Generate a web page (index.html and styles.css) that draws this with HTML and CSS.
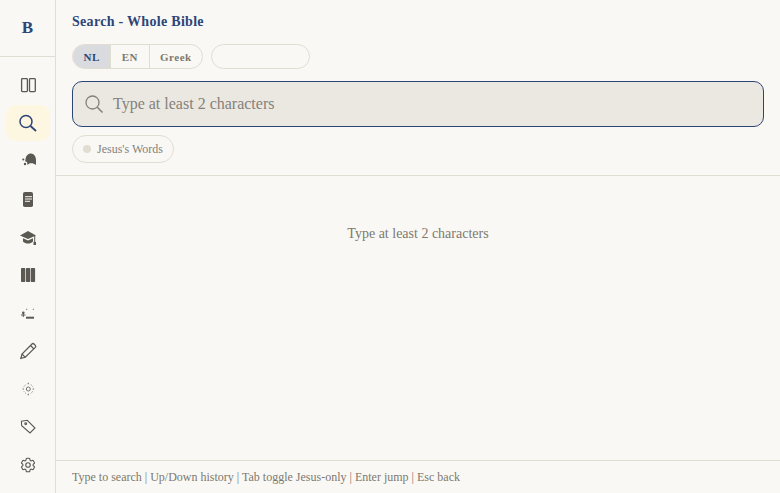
FILE: index.html
```html
<!DOCTYPE html>
<html>
  <head>
    <meta name="viewport" content="width=device-width, initial-scale=1" />
    <link rel="stylesheet" href="styles.css">
  </head>
  <body>
    <div class="app">
      <nav class="sidebar">
        <div class="brand">B</div>
        <div class="nav-list">
          <a class="nav-item">
            <svg width="18" height="18" viewBox="0 0 18 18" fill="none" stroke="#5c5852" stroke-width="1.3"><rect x="2.6" y="2.6" width="5.800" height="13" rx=".8"/><rect x="10.500" y="2.6" width="5.800" height="13" rx=".8"/></svg>
          </a>
          <a class="nav-item active">
            <svg width="20" height="20" viewBox="0 0 20 20" fill="none" stroke="#2d4577" stroke-width="1.5"><circle cx="8" cy="8.500" r="6"/><path d="M12.500 13l5.500 5" stroke-width="1.800"/></svg>
          </a>
          <a class="nav-item">
            <svg width="18" height="18" viewBox="0 0 18 18" fill="#5c5852"><path d="M6.500 8C6.500 4 9 1.500 12 1.500S17 4.500 17 8v5c-1.500-1.200-3-1.800-5-1.800-1.500 0-2.500.6-3.500 1.800L8 10l-2-.8z"/><circle cx="4.300" cy="7.500" r="1.100"/><circle cx="6" cy="12" r="1.200"/></svg>
          </a>
          <a class="nav-item">
            <svg width="18" height="18" viewBox="0 0 18 18"><rect x="4" y="2" width="10" height="15" rx="1.800" fill="#5c5852"/><path d="M6 6.700h7M6 9h7M6 11.300h5" stroke="#faf8f4" stroke-width="1"/></svg>
          </a>
          <a class="nav-item">
            <svg width="18" height="18" viewBox="0 0 18 18" fill="#5c5852"><path d="M9 3L1 7.500 9 11l8-3.500z"/><path d="M4 10.200v3.300c1.500 1.500 3 2 5 2s3.500-.5 5-2v-3.300l-5 2.300z"/><rect x="15.200" y="8" width="1" height="6"/><rect x="14.500" y="14" width="2.500" height="3"/></svg>
          </a>
          <a class="nav-item">
            <svg width="18" height="18" viewBox="0 0 18 18" fill="#5c5852"><rect x="2" y="2" width="4.300" height="14" rx=".7"/><rect x="7" y="2" width="4.200" height="14" rx=".7"/><rect x="11.800" y="2" width="4.300" height="14" rx=".7"/></svg>
          </a>
          <a class="nav-item">
            <svg width="18" height="18" viewBox="0 0 18 18" fill="#5c5852"><rect x="7" y="12.700" width="8" height="2"/><rect x="7.200" y="4.800" width="1" height="1"/><rect x="13.800" y="4.800" width="1" height="1"/><circle cx="4.300" cy="8.700" r="1.300"/><rect x="2" y="10.500" width="4.500" height="1"/><rect x="3.800" y="8.700" width="1" height="4.300"/></svg>
          </a>
          <a class="nav-item">
            <svg width="18" height="18" viewBox="0 0 18 18" fill="none" stroke="#5c5852" stroke-width="1.200"><path d="M1.800 16.400L3 12 13 2q1-1 2 0l1.300 1.400q.9 1 0 2L6.300 15.300z"/><path d="M11.500 3.500L15 7M3 12l3.300 3.300"/></svg>
          </a>
          <a class="nav-item">
            <svg width="18" height="18" viewBox="0 0 18 18" fill="none" stroke="#77736c" stroke-width="1"><circle cx="9.300" cy="9" r="2"/><path d="M9.300 2.800v1.500M9.300 13.700v1.500M3.500 9H5M13.600 9h1.500" stroke-width="1.200"/><path d="M5 6.500A5 5 0 0 1 6.800 4.700M11.800 4.700A5 5 0 0 1 13.600 6.500M13.600 11.500a5 5 0 0 1-1.800 1.800M6.800 13.300a5 5 0 0 1-1.800-1.800" stroke-dasharray="1 1"/></svg>
          </a>
          <a class="nav-item">
            <svg width="18" height="18" viewBox="0 0 18 18" fill="none" stroke="#5c5852" stroke-width="1.100"><path d="M2.400 3.300l5.900-1L16 10l-5 5-8.300-7.300z"/><circle cx="6.700" cy="5.800" r=".9"/></svg>
          </a>
          <a class="nav-item">
            <svg width="18" height="18" viewBox="0 0 24 24" fill="none" stroke="#5c5852" stroke-width="1.500"><path d="M9.594 3.940c.09-.542.56-.94 1.110-.94h2.593c.55 0 1.020.398 1.110.94l.213 1.281c.063.374.313.686.645.870.074.040.147.083.220.127.325.196.720.257 1.075.124l1.217-.456a1.125 1.125 0 0 1 1.370.490l1.296 2.247a1.125 1.125 0 0 1-.260 1.431l-1.003.827c-.293.241-.438.613-.430.992a7.723 7.723 0 0 1 0 .255c-.008.378.137.750.430.991l1.004.827c.424.350.534.955.260 1.430l-1.298 2.247a1.125 1.125 0 0 1-1.369.491l-1.217-.456c-.355-.133-.750-.072-1.076.124a6.470 6.470 0 0 1-.220.128c-.331.183-.581.495-.644.869l-.213 1.281c-.09.543-.56.940-1.110.940h-2.594c-.55 0-1.019-.398-1.110-.940l-.213-1.281c-.062-.374-.312-.686-.644-.870a6.520 6.520 0 0 1-.220-.127c-.325-.196-.720-.257-1.076-.124l-1.217.456a1.125 1.125 0 0 1-1.369-.490l-1.297-2.247a1.125 1.125 0 0 1 .260-1.431l1.004-.827c.292-.240.437-.613.430-.991a6.932 6.932 0 0 1 0-.255c.007-.380-.138-.751-.430-.992l-1.004-.827a1.125 1.125 0 0 1-.260-1.430l1.297-2.247a1.125 1.125 0 0 1 1.370-.491l1.216.456c.356.133.751.072 1.076-.124.072-.044.146-.086.220-.128.332-.183.582-.495.644-.869l.214-1.280z"/><circle cx="12" cy="12" r="3"/></svg>
          </a>
        </div>
      </nav>
      <main class="content">
        <header class="search-head">
          <h1>Search - Whole Bible</h1>
          <div class="lang-row">
            <div class="lang-group">
              <button class="lang-btn selected">NL</button>
              <button class="lang-btn">EN</button>
              <button class="lang-btn">Greek</button>
            </div>
            <div class="scope-box"></div>
          </div>
          <div class="search-box">
            <svg width="20" height="20" viewBox="0 0 20 20" fill="none" stroke="#85817a" stroke-width="1.300"><circle cx="8.500" cy="8.500" r="6.500"/><path d="M13.300 13.300l5.200 5.200" stroke-width="1.600"/></svg>
            <span>Type at least 2 characters</span>
          </div>
          <button class="chip"><i class="dot"></i>Jesus's Words</button>
        </header>
        <section class="results">
          <p>Type at least 2 characters</p>
        </section>
        <footer class="hints">
          Type to search | Up/Down history | Tab toggle Jesus-only | Enter jump | Esc back
        </footer>
      </main>
    </div>
  </body>
</html>
```

FILE: styles.css
```css
* {
  box-sizing: border-box;
}

html,
body {
  height: 100%;
}

body {
  margin: 0;
  background-color: #faf8f4;
  font-family: "Liberation Serif", "Times New Roman", serif;
  color: #7d7870;
  overflow: hidden;
}

.app {
  display: flex;
  height: 100%;
}

/* Left icon rail */
.sidebar {
  width: 56px;
  flex-shrink: 0;
  border-right: 1px solid #e2ddd2;
}

.brand {
  height: 57px;
  border-bottom: 1px solid #e2ddd2;
  display: flex;
  align-items: center;
  justify-content: center;
  color: #2d4577;
  font-size: 17px;
  font-weight: bold;
}

.nav-list {
  display: flex;
  flex-direction: column;
  align-items: center;
  padding-top: 10px;
  gap: 2px;
}

.nav-item {
  width: 44px;
  height: 36px;
  border-radius: 10px;
  display: flex;
  align-items: center;
  justify-content: center;
}

.nav-item.active {
  background-color: #fdf6e1;
}

/* Main column */
.content {
  flex: 1;
  display: flex;
  flex-direction: column;
  min-width: 0;
}

.search-head {
  padding: 13px 16px 12px;
  border-bottom: 1px solid #e2ddd2;
}

.search-head h1 {
  margin: 0;
  font-size: 14px;
  line-height: 17px;
  color: #2d4577;
  letter-spacing: 0.3px;
}

.lang-row {
  display: flex;
  gap: 8px;
  margin-top: 14px;
}

.lang-group {
  display: flex;
  height: 25px;
  border: 1px solid #e2ddd2;
  border-radius: 13px;
  overflow: hidden;
}

.lang-btn {
  border: none;
  border-left: 1px solid #e2ddd2;
  background: none;
  padding: 0 10.5px;
  font-family: inherit;
  font-size: 11px;
  font-weight: bold;
  letter-spacing: 0.5px;
  color: #7d7870;
}

.lang-btn:first-child {
  border-left: none;
}

.lang-btn.selected {
  background-color: #dadbde;
  color: #2d4577;
}

.scope-box {
  width: 99px;
  height: 25px;
  border: 1px solid #e2ddd2;
  border-radius: 13px;
}

.search-box {
  display: flex;
  align-items: center;
  gap: 9px;
  height: 46px;
  margin-top: 12px;
  padding: 0 11px;
  background-color: #ebe8e1;
  border: 1px solid #2d4577;
  border-radius: 10px;
  font-size: 16px;
  color: #85817a;
}

.chip {
  display: flex;
  align-items: center;
  gap: 6px;
  height: 28px;
  margin-top: 8px;
  padding: 0 10px;
  background: none;
  border: 1px solid #e2ddd2;
  border-radius: 14px;
  font-family: inherit;
  font-size: 12px;
  color: #85817a;
}

.dot {
  width: 8px;
  height: 8px;
  border-radius: 50%;
  background-color: #e2ddd2;
}

.results {
  flex: 1;
  text-align: center;
  font-size: 14px;
}

.results p {
  margin: 50px 0 0;
  line-height: 16px;
}

.hints {
  height: 33px;
  padding: 9px 16px 0;
  border-top: 1px solid #e2ddd2;
  font-size: 12px;
  line-height: 15px;
}
```
